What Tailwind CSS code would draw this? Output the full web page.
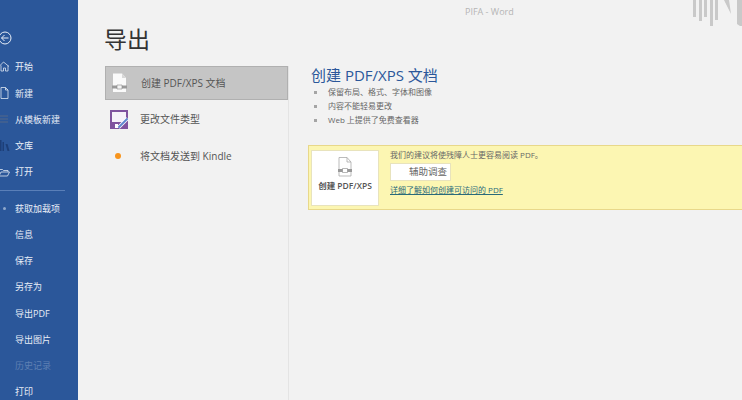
<!DOCTYPE html>
<html lang="zh-CN">
  <head>
    <meta charset="UTF-8" />
    <title>PIFA - Word</title>
    <script src="https://cdn.jsdelivr.net/npm/@tailwindcss/browser@4"></script>
  </head>
  <body class="w-[742px] h-[400px] overflow-hidden bg-[#f2f2f2] font-['Open_Sans','Noto_Sans_CJK_SC',sans-serif] text-[#555]">
    <div class="relative flex h-[400px]">
      <!-- Sidebar -->
      <aside class="w-[78px] h-[400px] shrink-0 overflow-hidden bg-[#2b579a] text-[#e8eef7] text-[9px] pt-[31px]">
        <svg class="w-[14px] h-[14px] ml-[-2px] mb-[9px]" viewBox="0 0 14 14" fill="none" stroke="#e8eef7" stroke-width="1">
          <circle cx="7" cy="7" r="6" />
          <path d="M3.500 7h7M6.500 4L3.500 7l3 3" />
        </svg>
        <div class="flex items-center h-[26.2px] pl-[15px] relative">
          <svg class="absolute left-[-1px] top-[7px] w-[11px] h-[11px]" viewBox="0 0 11 11" fill="none" stroke="#dfe7f3" stroke-width="0.8"><path d="M0 5.500L4.500 1 10 5.500M2 4.500V10h2.500V7h2v3H9V4.500" /></svg>
          开始
        </div>
        <div class="flex items-center h-[26.2px] pl-[15px] relative">
          <svg class="absolute left-[0px] top-[7px] w-[9px] h-[12px]" viewBox="0 0 9 12" fill="none" stroke="#dfe7f3" stroke-width="0.8"><path d="M1 .5h4.500L8 3v8.500H1zM5.500.5V3H8" /></svg>
          新建
        </div>
        <div class="flex items-center h-[26.2px] pl-[15px] relative">
          <svg class="absolute left-[-1px] top-[8px] w-[10px] h-[10px]" viewBox="0 0 10 10" fill="#3f5f91"><path d="M0 1h9v2H0zM0 4h9v2H0zM0 7h9v2H0z" /></svg>
          从模板新建
        </div>
        <div class="flex items-center h-[26.2px] pl-[15px] relative">
          <svg class="absolute left-[-1px] top-[6px] w-[11px] h-[13px]" viewBox="0 0 11 13" fill="#1d3f78"><path d="M0 1h2.500v11H0zM3.500 3H5v9H3.500zM6.500 5l2 0 2 7H8.500z" /></svg>
          文库
        </div>
        <div class="flex items-center h-[26.2px] pl-[15px] relative">
          <svg class="absolute left-[-1px] top-[9px] w-[11px] h-[9px]" viewBox="0 0 11 9" fill="none" stroke="#dfe7f3" stroke-width="0.8"><path d="M0 8V1.500h3.500l1 1H9V4M0 8l2-4h8.500L8.500 8z" /></svg>
          打开
        </div>
        <div class="h-px w-[65px] bg-[#5a7fb8] mt-[5px] mb-[4.500px]"></div>
        <div class="flex items-center h-[26.2px] pl-[15px] relative">
          <span class="absolute left-[3px] top-[12px] w-[3px] h-[3px] rounded-full bg-[#8fa8cc]"></span>
          获取加载项
        </div>
        <div class="flex items-center h-[26.2px] pl-[15px]">信息</div>
        <div class="flex items-center h-[26.2px] pl-[15px]">保存</div>
        <div class="flex items-center h-[26.2px] pl-[15px]">另存为</div>
        <div class="flex items-center h-[26.2px] pl-[15px]">导出PDF</div>
        <div class="flex items-center h-[26.2px] pl-[15px]">导出图片</div>
        <div class="flex items-center h-[26.2px] pl-[15px] text-[#5f80b3]">历史记录</div>
        <div class="flex items-center h-[26.2px] pl-[15px]">打印</div>
      </aside>

      <!-- Main -->
      <main class="flex-1 min-w-0">
        <h1 class="ml-[26px] mt-[25px] h-[28px] text-[23px] leading-[28px] font-normal text-[#333]">导出</h1>
        <div class="flex mt-[13px] ml-[27px]">
          <!-- Export options -->
          <nav class="w-[184px] h-[334px] border-r border-[#e4e4e4] text-[10px]">
            <div class="flex items-center w-[183px] h-[34px] bg-[#c5c5c5] border border-[#b0b0b0]">
              <svg class="ml-[5px] w-[17px] h-[20px]" viewBox="0 0 17 20" fill="none">
                <path d="M2 .5h9l4 4.500V19H2z" fill="#fafafa" />
                <path d="M11 .5V5h4" fill="#d8d8d8" />
                <path d="M1 12.500h15v3H1z" fill="#9a9a9a" />
                <path d="M6 12h5v4h-5z" fill="#f4f4f4" stroke="#888" stroke-width="0.6" />
              </svg>
              <span class="ml-[13px]">创建 PDF/XPS 文档</span>
            </div>
            <div class="flex items-center w-[183px] h-[38px]">
              <svg class="ml-[5px] w-[19px] h-[19px]" viewBox="0 0 19 19" fill="none">
                <path d="M1 1h16v17H1z" fill="#f6f1f9" stroke="#80539f" stroke-width="2" />
                <path d="M1 12h16v6H1z" fill="#80539f" />
                <path d="M5 14h3v4H5z" fill="#fff" />
                <path d="M8.500 17.500l9-9" stroke="#fff" stroke-width="3.500" />
                <path d="M8.500 17.500l9-9" stroke="#5f86cf" stroke-width="2" />
              </svg>
              <span class="ml-[11px]">更改文件类型</span>
            </div>
            <div class="flex items-center w-[183px] h-[36px]">
              <span class="ml-[10px] w-[6px] h-[6px] rounded-full bg-[#f7941d]"></span>
              <span class="ml-[19px]">将文档发送到 Kindle</span>
            </div>
          </nav>

          <!-- Detail pane -->
          <section class="flex-1 min-w-0 pl-[22px]">
            <h2 class="text-[15px] leading-[20px] font-normal text-[#2b579a] mt-[-1px]">创建 PDF/XPS 文档</h2>
            <ul class="text-[8px] text-[#666]">
              <li class="flex items-center h-[14px]"><span class="w-[3px] h-[3px] bg-[#a5a5a5] ml-[3px] mr-[11px]"></span>保留布局、格式、字体和图像</li>
              <li class="flex items-center h-[14px]"><span class="w-[3px] h-[3px] bg-[#a5a5a5] ml-[3px] mr-[11px]"></span>内容不能轻易更改</li>
              <li class="flex items-center h-[14px]"><span class="w-[3px] h-[3px] bg-[#a5a5a5] ml-[3px] mr-[11px]"></span>Web 上提供了免费查看器</li>
            </ul>
            <div class="flex mt-[18px] ml-[-3px] w-[440px] h-[65px] bg-[#fcf6b2] border border-[#e8d88a] pl-[2px] pt-[4px]">
              <div class="flex flex-col items-center w-[68px] h-[56px] bg-white border border-[#e8e3bd]">
                <svg class="mt-[6px] w-[16px] h-[20px]" viewBox="0 0 16 20" fill="none">
                  <path d="M2 .5h8l4 4.500V19H2zM10 .5V5h4" stroke="#aaa" stroke-width="0.8" />
                  <path d="M1 12h14v3H1z" fill="#999" />
                  <path d="M5.500 11.500h5v4h-5z" fill="#fff" stroke="#888" stroke-width="0.6" />
                </svg>
                <span class="mt-[3px] text-[8.500px] font-semibold text-[#555]">创建 PDF/XPS</span>
              </div>
              <div class="ml-[11px] text-[8px] text-[#666]">
                <p class="leading-[11px] mt-[-1px]">我们的建议将使残障人士更容易阅读 PDF。</p>
                <div class="flex items-center w-[61px] h-[18px] mt-[3px] pl-[18px] bg-white border border-[#e8e3bd] text-[9.500px]">辅助调查</div>
                <a class="block mt-[3px] leading-[12px] underline text-[#2a6a7a]">详细了解如何创建可访问的 PDF</a>
              </div>
            </div>
          </section>
        </div>
      </main>

      <!-- Title bar -->
      <span class="absolute left-[465px] top-[6px] text-[9px] leading-[11px] text-[#b5b5b5]">PIFA - Word</span>
      <svg class="absolute left-[690px] top-0 w-[52px] h-[28px]" viewBox="0 0 52 28" fill="#c9c9c9">
        <path d="M3 0h3v17H3zM9 0h3v21H9zM14 0h3v17h-3zM20 0h3v26h-3zM25 0h3v20h-3zM34 0h5l2 14zM47 0h5v26h-2l-3-2z" />
      </svg>
    </div>
  </body>
</html>
